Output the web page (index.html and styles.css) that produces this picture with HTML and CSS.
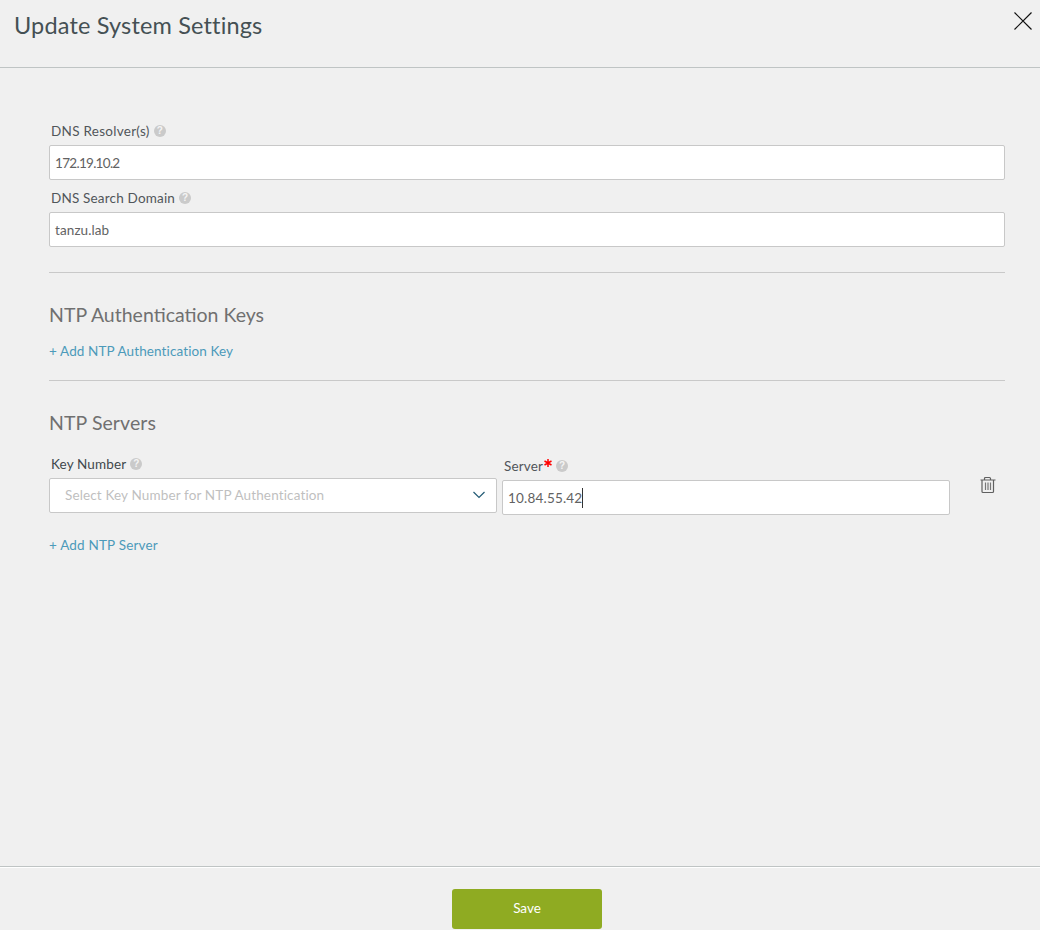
FILE: index.html
```html
<!DOCTYPE html>
<html lang="en">
<head>
<meta charset="utf-8">
<title>Update System Settings</title>
<link rel="stylesheet" href="styles.css">
</head>
<body>
<div class="dialog">
  <header class="header">
    <h1 class="title">Update System Settings</h1>
    <svg class="close" width="20" height="20" viewBox="0 0 20 20"><path d="M1.5 1.5l17 17M18.5 1.5l-17 17"/></svg>
  </header>
  <main class="content">
    <div class="field">
      <div class="label"><span class="t-resolver">DNS Resolver(s)</span><span class="help">?</span></div>
      <div class="input"><span class="t-ip">172.19.10.2</span></div>
    </div>
    <div class="field">
      <div class="label"><span class="t-domain">DNS Search Domain</span><span class="help">?</span></div>
      <div class="input"><span class="t-lab">tanzu.lab</span></div>
    </div>
    <section class="section auth">
      <h2 class="heading"><span class="t-auth">NTP Authentication Keys</span></h2>
      <a class="link"><span class="t-addkey">+ Add NTP Authentication Key</span></a>
    </section>
    <section class="section servers">
      <h2 class="heading"><span class="t-servers">NTP Servers</span></h2>
      <div class="row">
        <div class="column">
          <div class="label key-label"><span class="t-key">Key Number</span><span class="help">?</span></div>
          <div class="input select"><span class="t-select">Select Key Number for NTP Authentication</span>
            <svg class="chevron" width="14" height="8" viewBox="0 0 14 8"><path d="M1.5 1l5.5 5.5L12.5 1"/></svg>
          </div>
        </div>
        <div class="column server">
          <div class="label"><span class="t-server">Server</span><svg class="required" width="8" height="8" viewBox="0 0 8 8"><path d="M4 0v8M.5 2l7 4M7.5 2l-7 4"/></svg><span class="help">?</span></div>
          <div class="input"><span class="t-ntp">10.84.55.42</span><span class="caret"></span></div>
        </div>
        <svg class="trash" width="16" height="18" viewBox="0 0 16 18"><path d="M.5 4h15M4.5 3.5v-1q0-1 1-1h4q1 0 1 1v1M2 4.5v11q0 1 1 1h9.500q1 0 1-1v-11"/><path class="slats" d="M5.5 6.500v7.500M8 6.500v7.500M10.500 6.500v7.500"/></svg>
      </div>
      <a class="link"><span class="t-addserver">+ Add NTP Server</span></a>
    </section>
  </main>
  <footer class="footer"><button class="save">Save</button></footer>
</div>
</body>
</html>
```
FILE: styles.css
```css
* { box-sizing: border-box; }
body { margin: 0; background: #f0f0f0; color: #50565a; font: 13.5px/20px Lato, sans-serif; }
.dialog { display: flex; flex-direction: column; height: 930px; overflow: hidden; }
.header { display: flex; justify-content: space-between; height: 68px; padding: 11px 8px 0 14px; border-bottom: 1px solid #bfc4c4; }
.title { margin: -1px 0 0; color: #455054; font-size: 23.5px; line-height: 30px; font-weight: 400; letter-spacing: .16px; white-space: nowrap; }
.close { margin-right: -1px; fill: none; stroke: #111; stroke-width: 1.2; }
.content { flex: 1; padding: 53px 35px 0 49px; }
.field { height: 67px; }
.label { display: flex; align-items: center; height: 20px; padding-left: 2px; white-space: nowrap; }
.help { width: 12px; height: 12px; margin-left: 4px; border-radius: 50%; background: #cacaca; color: #f4f4f4; font: 700 10px/12px "Liberation Sans", sans-serif; text-align: center; }
.input { display: flex; align-items: center; height: 35px; margin-top: 4px; padding: 1px 5px 0; border: 1px solid #c8c8c8; border-radius: 2px; background: #fff; color: #626262; white-space: nowrap; }
.section { border-top: 1px solid #c9c9c9; }
.auth { height: 108px; margin-top: 17px; padding-top: 27px; }
.servers { padding-top: 27px; }
.heading { margin: 0; height: 30px; color: #707070; font-size: 19.5px; line-height: 30px; font-weight: 400; white-space: nowrap; }
.link { display: block; height: 20px; margin-top: 11px; color: #4c9aba; white-space: nowrap; }
.servers .link { margin-top: 20px; }
.row { display: flex; align-items: flex-start; gap: 5px; margin-top: 16px; }
.column { width: 448px; }
.server { padding-top: 2px; }
.key-label { color: #41484c; }
.select { justify-content: space-between; padding: 0 10px 1px 15px; color: #bfbfbf; }
.chevron { fill: none; stroke: #235b75; stroke-width: 1.2; }
.required { align-self: flex-start; margin: 3px 0 0 1px; fill: none; stroke: #f00; stroke-width: 1.5; }
.caret { width: 1px; height: 20px; background: #333; }
.trash { margin: 22px 0 0 25px; fill: none; stroke: #606060; stroke-width: 1.2; }
.slats { stroke: #777; }
.footer { display: flex; justify-content: center; height: 64px; padding: 21px 0 0 14px; border-top: 1px solid #bfc4c4; box-shadow: inset 0 1px #fff; }
.save { width: 150px; height: 40px; margin-top: 1px; padding: 0 0 2px; border: 0; border-radius: 3px; background: #8fab22; color: #fff; font: 13.5px/20px Lato, sans-serif; }

/* Per-label tracking */
.t-resolver { letter-spacing: .28px; }
.t-domain { letter-spacing: .18px; }
.t-ip { letter-spacing: -.7px; }
.t-lab { letter-spacing: .1px; }
.t-addkey { letter-spacing: .11px; }
.t-key { letter-spacing: .13px; }
.t-select { letter-spacing: .14px; }
.t-server { letter-spacing: .15px; }
.t-ntp { letter-spacing: .2px; }
.t-addserver { letter-spacing: .18px; }
.t-servers { letter-spacing: .08px; }
```
